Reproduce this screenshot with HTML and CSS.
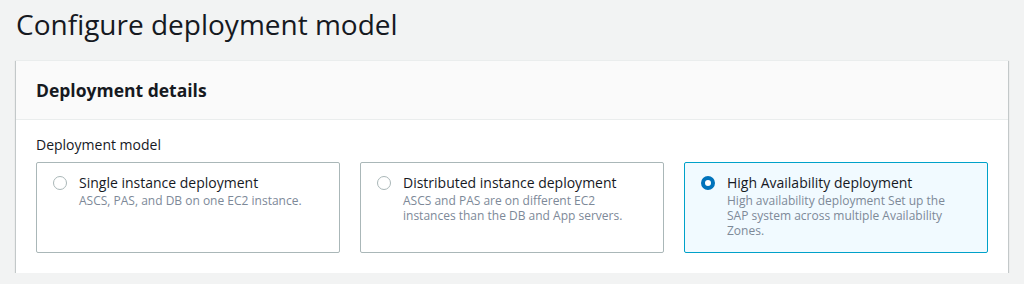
FILE: index.html
```html
<!DOCTYPE html>
<html lang="en">
<head>
    <meta charset="UTF-8">
    <title>Configure deployment model</title>
    <link rel="stylesheet" href="styles.css">
</head>
<body>

<h1 class="page-title">Configure deployment model</h1>

<section class="panel">
    <div class="panel-header">
        <h2>Deployment details</h2>
    </div>
    <div class="panel-body">
        <div class="field-label">Deployment model</div>
        <div class="tiles">
            <label class="tile">
                <span class="radio"></span>
                <span class="tile-text">
                    <span class="tile-title">Single instance deployment</span>
                    <span class="tile-desc">ASCS, PAS, and DB on one EC2 instance.</span>
                </span>
            </label>
            <label class="tile">
                <span class="radio"></span>
                <span class="tile-text">
                    <span class="tile-title">Distributed instance deployment</span>
                    <span class="tile-desc">ASCS and PAS are on different EC2 instances than the DB and App servers.</span>
                </span>
            </label>
            <label class="tile selected">
                <span class="radio"></span>
                <span class="tile-text">
                    <span class="tile-title">High Availability deployment</span>
                    <span class="tile-desc">High availability deployment Set up the SAP system across multiple Availability Zones.</span>
                </span>
            </label>
        </div>
    </div>
</section>

</body>
</html>
```

FILE: styles.css
```css
body {
    margin: 0;
    padding: 0 16px;
    background-color: #f2f3f3;
    font-family: "Open Sans", Arial, sans-serif;
    color: #16191f;
}

.page-title {
    margin: 0;
    padding-top: 5px;
    height: 55px;
    font-size: 28px;
    font-weight: 400;
    line-height: 38px;
}

.panel {
    width: 992px;
    background: white;
    box-shadow: 0 1px 1px 0 rgba(0, 28, 36, 0.3), 1px 1px 1px 0 rgba(0, 28, 36, 0.15), -1px 1px 1px 0 rgba(0, 28, 36, 0.15);
    border-top: 1px solid #eaeded;
}

.panel-header {
    background: #fafafa;
    border-bottom: 1px solid #eaeded;
    padding: 0 20px;
    height: 58px;
    display: flex;
    align-items: center;
}

.panel-header h2 {
    margin: 0;
    font-size: 17.5px;
    font-weight: 700;
}

.panel-body {
    padding: 15px 20px 20px;
}

.field-label {
    font-size: 14px;
    line-height: 20px;
    color: #16191f;
    margin-bottom: 7px;
}

.tiles {
    display: grid;
    grid-template-columns: repeat(3, 1fr);
    gap: 20px;
}

.tile {
    display: flex;
    gap: 12px;
    height: 91px;
    box-sizing: border-box;
    padding: 10px 16px;
    border: 1px solid #aab7b8;
    border-radius: 2px;
    background: white;
}

.tile.selected {
    border-color: #00a1c9;
    background: #f1faff;
}

.radio {
    flex: none;
    width: 14px;
    height: 14px;
    margin-top: 3px;
    box-sizing: border-box;
    border: 1px solid #aab7b8;
    border-radius: 50%;
    background: white;
}

.selected .radio {
    border: 4px solid #0073bb;
}

.tile-text {
    display: flex;
    flex-direction: column;
    width: 230px;
}

.tile-title {
    font-size: 14px;
    line-height: 20px;
    color: #16191f;
}

.tile-desc {
    font-size: 12px;
    line-height: 15px;
    color: #7d8998;
}
```
